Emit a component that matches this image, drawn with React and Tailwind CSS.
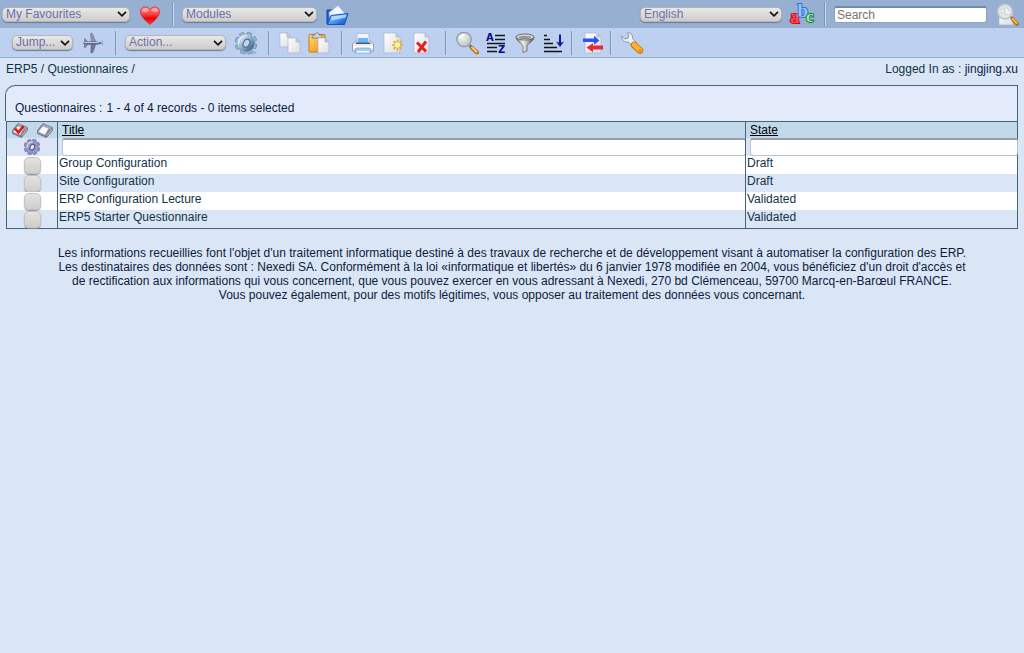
import React from "react";

function Icon({ children }) {
  return (
    <svg viewBox="0 0 24 24" className="block size-6 overflow-visible" fill="none" aria-hidden="true">
      {children}
    </svg>
  );
}

function Gradients() {
  return (
    <svg className="absolute size-0" aria-hidden="true">
      <defs>
        <linearGradient id="red" x1="0" y1="0" x2="0" y2="1">
          <stop offset="0" stopColor="#ff8a8a" />
          <stop offset=".45" stopColor="#ff3a3a" />
          <stop offset=".65" stopColor="#e80000" />
          <stop offset="1" stopColor="#ff4040" />
        </linearGradient>
        <linearGradient id="blue" x1="0" y1="0" x2="1" y2="1">
          <stop offset="0" stopColor="#a8dcff" />
          <stop offset=".5" stopColor="#4f9df5" />
          <stop offset="1" stopColor="#0b3fc0" />
        </linearGradient>
        <linearGradient id="paper" x1="0" y1="0" x2="1" y2="1">
          <stop offset="0" stopColor="#ffffff" />
          <stop offset="1" stopColor="#dcdce6" />
        </linearGradient>
        <linearGradient id="steel" x1="0" y1="0" x2="1" y2="1">
          <stop offset="0" stopColor="#dbe9f4" />
          <stop offset=".5" stopColor="#8fafcb" />
          <stop offset="1" stopColor="#43668e" />
        </linearGradient>
        <linearGradient id="gold" x1="0" y1="0" x2="1" y2="1">
          <stop offset="0" stopColor="#ffe07a" />
          <stop offset="1" stopColor="#ee8a00" />
        </linearGradient>
        <linearGradient id="metal" x1="0" y1="0" x2="1" y2="0">
          <stop offset="0" stopColor="#6c6c6c" />
          <stop offset=".4" stopColor="#f2f2f2" />
          <stop offset="1" stopColor="#4c4c4c" />
        </linearGradient>
        <radialGradient id="glass" cx=".4" cy=".35" r=".7">
          <stop offset="0" stopColor="#f4f6f4" />
          <stop offset="1" stopColor="#b4c2c4" />
        </radialGradient>
      </defs>
    </svg>
  );
}

const Heart = () => (
  <Icon>
    <path d="M12 22.500C8 19 2.500 14.500 2.500 9.500 2.500 6.500 4.700 5 7.200 5 9.500 5 11 6 12 7.700 13 6 14.500 5 16.800 5 19.300 5 21.500 6.500 21.500 9.500 21.500 14.500 16 19 12 22.500Z" fill="url(#red)" stroke="#d42a35" strokeWidth=".8" />
    <path d="M4 9c.3-2 1.800-3 3.500-3 2 0 3 1 3.700 2.500C9 10.500 6 11 4 9Z" fill="#ffb9b9" opacity=".7" />
    <path d="M13 8.500c.8-1.700 2-2.500 3.700-2.500 2 0 3.300 1 3.500 3-2 1.500-5 1-7.200-.5Z" fill="#ffb9b9" opacity=".6" />
  </Icon>
);

const Folder = () => (
  <Icon>
    <path d="M2 8h6l1 2h10v12h-17Z" fill="#2463dc" stroke="#1240a8" />
    <path d="m4 10.500 9-7 7 8-3 6H5Z" fill="#f4f6ff" stroke="#a9b6de" strokeWidth=".7" />
    <path d="M6 13.500 23 11.500 19.500 22.500h-17Z" fill="url(#blue)" stroke="#1350d0" />
    <path d="m7 14.500 14.500-2-1 3-14.500 3Z" fill="#c4e4ff" opacity=".8" />
  </Icon>
);

const Plane = () => (
  <Icon>
    <path d="M9.500 2.500c.8-.7 1.700-.5 2.200.5l3 7.500h-4.500Z" fill="#8d92ae" stroke="#747a99" strokeWidth=".6" />
    <path d="M9.800 21.500c.8.700 1.700.5 2.200-.5l2.700-7.500h-4.500Z" fill="#70769a" stroke="#5e6486" strokeWidth=".6" />
    <path d="M3 7.500h1.500L7 11v3l-2.500 3H3Z" fill="#7e84a3" />
    <path d="M2.500 11c5-1 12-1 16 0 1.500.3 2.500.6 2.500 1s-1 .9-2.500 1.200c-4 1-11 1-16 0Z" fill="#646a8b" />
    <path d="M3 11.500h15" stroke="#c1c6da" strokeWidth="1" />
    <path d="M21.500 9.500v5" stroke="#9298b5" strokeWidth=".8" />
  </Icon>
);

const teeth = [0, 45, 90, 135, 180, 225, 270, 315];
const Gear = () => (
  <Icon>
    <ellipse cx="15" cy="21.500" rx="8" ry="2" fill="#7b90b5" opacity=".4" />
    {teeth.map((a) => (
      <path key={a} d="M8.800 6 10 1h4l1.200 5Z" transform={`rotate(${a + 20} 12 12)`} fill="#96b4ce" stroke="#6488ac" strokeWidth=".6" />
    ))}
    <circle cx="12" cy="12" r="6" stroke="url(#steel)" strokeWidth="5.200" />
    <ellipse cx="12.500" cy="12" rx="3" ry="4.300" transform="rotate(30 12 12)" fill="#c3d3ed" stroke="#47698f" strokeWidth="1.100" />
    <path d="M4.500 13c0-5 3-8.500 8-8.500" stroke="#e9f3fa" strokeWidth="1.200" />
  </Icon>
);

const Page = ({ x = 0, y = 0, w = 12, h = 15 }) => (
  <path d={`M${x} ${y}h${w - 4}l4 4v${h - 4}h-${w}Z M${x + w - 4} ${y}v4h4`} fill="url(#paper)" stroke="#aeb4c4" strokeWidth=".7" />
);

const Copy = () => (
  <Icon>
    <Page x={2} y={2} w={11} h={14} />
    <Page x={10} y={7} w={12} h={15} />
  </Icon>
);

const Paste = () => (
  <Icon>
    <rect x="2" y="3.500" width="16" height="17.500" rx="1" fill="url(#gold)" stroke="#c97b08" />
    <path d="M5 6c0-2 2-2 3-2 0-3 4-3 4 0 1 0 3 0 3 2v1H5Z" fill="#d3d5dc" stroke="#70727b" strokeWidth=".8" />
    <Page x={11} y={7} w={11} h={15} />
  </Icon>
);

const Printer = () => (
  <Icon>
    <path d="m1.500 13 3-3h15l3 3v7h-21Z" fill="#e7eaf0" stroke="#8591a7" strokeWidth=".8" />
    <path d="M6 2.500h12V12H6Z" fill="#eef5ff" stroke="#9fb4d2" strokeWidth=".7" />
    <path d="M7 7h10v5H7Z" fill="#72b5f2" />
    <path d="M5 11.500h14l.5 1.500h-15Z" fill="#4b5b71" />
    <path d="M2 15h20v2H2Z" fill="#fff" />
    <path d="m5 17-1 5h16l-1-5Z" fill="#9bd0fa" stroke="#8ba2bf" strokeWidth=".8" />
    <path d="M6 20h12l.5 1.500h-13Z" fill="#fff" />
  </Icon>
);

const NewPage = () => (
  <Icon>
    <Page x={3} y={2} w={16} h={20} />
    <g stroke="#f0a80c" strokeWidth="1.700">
      <path d="M16.500 8.500v11M11 14h11M12.600 10.100l7.800 7.800M20.400 10.100l-7.800 7.800" />
    </g>
    <circle cx="16.500" cy="14" r="2.700" fill="#fff3a8" />
  </Icon>
);

const DeletePage = () => (
  <Icon>
    <Page x={3} y={2} w={15} h={20} />
    <path d="m6 11.500 9 9M15 10.500l-8 10.500" stroke="#e91f18" strokeWidth="2.900" />
  </Icon>
);

const Magnifier = () => (
  <Icon>
    <path d="m14.500 14.500 3 2.500" stroke="#73736f" strokeWidth="3" />
    <path d="m17 17 5 4.500" stroke="#b86a08" strokeWidth="4" strokeLinecap="round" />
    <path d="m17 16.500 4.500 4.200" stroke="#ffc98a" strokeWidth="2" strokeLinecap="round" />
    <circle cx="9" cy="8.500" r="7.200" fill="url(#glass)" stroke="#8f9997" strokeWidth="1.200" />
    <path d="M4.500 8c.5-2.500 2-4 5-4" stroke="#fff" strokeWidth="1.500" />
  </Icon>
);

const SortAZ = () => (
  <Icon>
    <path d="M11 4.500h10M11 8.500h10M3 12.500h18M3 16.500h10M3 20.500h10" stroke="#161616" strokeWidth="1.300" />
    <text x="2" y="10" fontSize="10" className="font-['DejaVu_Sans'] font-bold" fill="#0b0b8c">A</text>
    <text x="14" y="22" fontSize="10" className="font-['DejaVu_Sans'] font-bold" fill="#0b0b8c">Z</text>
  </Icon>
);

const Filter = () => (
  <Icon>
    <path d="M3 6c0 4 5.500 6 7 9v6.500l4-1.500V15c1.500-3 7-5 7-9Z" fill="url(#metal)" stroke="#666" strokeWidth=".8" />
    <ellipse cx="12" cy="6" rx="9" ry="3" fill="#d8d8d8" stroke="#6d6d6d" />
    <ellipse cx="12" cy="6.500" rx="6.500" ry="1.600" fill="#959595" />
  </Icon>
);

const SortDown = () => (
  <Icon>
    <path d="M2 4.500h3M2 8.500h6M2 12.500h9M2 16.500h13M2 20.500h18" stroke="#111" strokeWidth="1.400" />
    <path d="M18 3.500v9" stroke="#151597" strokeWidth="2" />
    <path d="m14 10.500 4 1.500 4-1.500-4 5.500Z" fill="#151597" />
  </Icon>
);

const Exchange = () => (
  <Icon>
    <Page x={4} y={2} w={16} h={20} />
    <path d="M2 7.500h11V4.800l5.500 4.700-5.500 4.200v-2.700H2Z" fill="#2855f5" />
    <path d="M22 14.500H12v-2.300l-6.500 4.300 6.500 4.700V18.500h10Z" fill="#ee2637" />
  </Icon>
);

const Wrench = () => (
  <Icon>
    <path d="M7.500 1.800c3-.2 5.500 2.200 5 5.700l4 4-4 4-4-4.500c-4 .5-7-2-7-6L5 8l3-.8.7-2.700Z" fill="#edf0f5" stroke="#848b9a" strokeWidth=".9" />
    <path d="m14 14 6 5.500" stroke="#c87706" strokeWidth="6.500" strokeLinecap="round" />
    <path d="m14 13.700 6 5.500" stroke="#ffb62e" strokeWidth="4.600" strokeLinecap="round" />
    <circle cx="20" cy="19.500" r="1" fill="#b96b05" />
  </Icon>
);

const Abc = () => (
  <Icon>
    <text x="0" y="21" fontSize="19" strokeWidth="1.800" paintOrder="stroke" className="font-['Liberation_Serif'] font-bold">
      <tspan fill="#ff4a52" stroke="#c40a1c">a</tspan>
      <tspan dx="-2" dy="-6" fill="#8cc6ff" stroke="#2b6cd0">b</tspan>
      <tspan dx="-2" dy="5" fontSize="17" fill="#9af09c" stroke="#147a34">c</tspan>
    </text>
  </Icon>
);

const SearchPage = () => (
  <Icon>
    <path d="M4 5h10l4 4v14H4Z" fill="url(#paper)" stroke="#aeb4c4" strokeWidth=".7" />
    <path d="m15 14 3 3" stroke="#73736f" strokeWidth="2.500" />
    <path d="m17.500 17 4.500 5" stroke="#b86a08" strokeWidth="3.600" strokeLinecap="round" />
    <path d="m17.500 16.700 4 4.500" stroke="#ffbb3d" strokeWidth="1.800" strokeLinecap="round" />
    <circle cx="10" cy="9.500" r="7.500" fill="#dfe4e7" fillOpacity=".95" stroke="#b9c0c4" strokeWidth="1.300" />
    <path d="M6 7h3v4H6ZM10 6h3v3h3v3h-6Z" fill="#f4f6f7" stroke="#c5cbd0" strokeWidth=".6" />
  </Icon>
);

function SmallPad({ checked }) {
  return (
    <svg viewBox="0 0 16 16" className="block size-4" fill="none" aria-hidden="true">
      <path d="m6 1.500 9.500 4v3L9.500 15.500.5 11.500V8.500Z" fill="#84848f" stroke="#666672" strokeWidth=".7" />
      <path d="m6 3.500 6 2.500-4 7-7-3Z" fill="#f6f6fb" stroke="#a2a2b0" strokeWidth=".6" />
      <path d="m6.500 2 8.500 3.500-1.500 2-8.500-3.500Z" fill="#a5a5b8" />
      <path d="m10 13.500 5-6" stroke="#d4d4df" strokeWidth=".8" />
      {checked && <path d="m3 6.500 3.500 4 5-6.500" stroke="#ee1111" strokeWidth="2.600" />}
    </svg>
  );
}

function SmallGear() {
  return (
    <svg viewBox="0 0 24 24" className="block size-4" fill="none" aria-hidden="true">
      {teeth.map((a) => (
        <path key={a} d="M8.500 6 9.500 0h5l1 6Z" transform={`rotate(${a + 20} 12 12)`} fill="#8b8ebf" stroke="#6c6fa4" strokeWidth=".8" />
      ))}
      <circle cx="12" cy="12" r="6.300" stroke="#9497c7" strokeWidth="5" />
      <path d="M4.500 13c0-5 3-8.500 8.500-8.500" stroke="#d3d5f0" strokeWidth="2" />
      <ellipse cx="12.500" cy="12" rx="3.200" ry="4.600" transform="rotate(30 12 12)" fill="#e3e8f8" stroke="#484b80" strokeWidth="1.500" />
    </svg>
  );
}

const IconButton = ({ label, children }) => (
  <button type="button" aria-label={label} title={label} className="shrink-0">
    {children}
  </button>
);

const Select = ({ label, width }) => (
  <div className={`${width} mr-2 grid shrink-0 items-center`}>
    <select
      aria-label={label}
      className="col-start-1 row-start-1 h-[15px] w-full appearance-none rounded-[5px] border border-[#b5b5b8] bg-linear-to-b from-[#e9e9e8] to-[#cfcdca] pl-[3px] text-xs leading-[13px] text-[#6a70b0] shadow-[0_1px_1px_#667b99]"
    >
      <option>{label}</option>
    </select>
    <svg viewBox="0 0 10 6" className="pointer-events-none col-start-1 row-start-1 mr-[3px] h-1.5 w-2.5 justify-self-end" fill="none" aria-hidden="true">
      <path d="m1 .8 4 4 4-4" stroke="#111" strokeWidth="1.700" />
    </svg>
  </div>
);

const Separator = ({ tight }) => (
  <span className={`${tight ? "ml-[5px]" : "ml-2.5"} mr-2 h-6 w-0.5 shrink-0 border-l border-r border-l-[#7899bb] border-r-[#c5d8e6]`} />
);

const rows = [
  ["Group Configuration", "Draft"],
  ["Site Configuration", "Draft"],
  ["ERP Configuration Lecture", "Validated"],
  ["ERP5 Starter Questionnaire", "Validated"],
];

const filterClass =
  "ml-1 block h-[18px] w-[calc(100%-3px)] rounded-[3px] border border-t-2 border-[#b5c3d8] border-t-[#969ca8] bg-white px-1";

export default function App() {
  return (
    <div className="min-h-screen bg-[#dae6f6] font-['Liberation_Sans',Arial,sans-serif] text-xs leading-3.5 text-[#0f3347]">
      <Gradients />
      <header>
        <div className="flex h-7 items-center justify-between bg-[#97b0d1] pl-0.5 pr-[5px]">
          <div className="flex items-center">
            <Select label="My Favourites" width="w-32" />
            <IconButton label="Favourites"><Heart /></IconButton>
            <Separator />
            <Select label="Modules" width="w-[135px]" />
            <IconButton label="Open module"><Folder /></IconButton>
          </div>
          <div className="flex items-center">
            <Select label="English" width="w-[142px]" />
            <IconButton label="Change language"><Abc /></IconButton>
            <Separator />
            <input
              type="search"
              aria-label="Search"
              placeholder="Search"
              className="mr-2 h-[17px] w-[153px] rounded-[3px] border border-t-2 border-[#8ba1c0] border-t-[#7187a5] bg-white px-0.5 leading-3.5 placeholder:text-[#757575]"
            />
            <IconButton label="Search"><SearchPage /></IconButton>
          </div>
        </div>
        <div className="flex h-[30px] items-center border-b border-[#97b0d1] bg-[#bdd0f0] pl-3">
          <Select label="Jump..." width="w-[61px]" />
          <IconButton label="Jump"><Plane /></IconButton>
          <Separator />
          <Select label="Action..." width="w-[101px]" />
          <IconButton label="Run action"><Gear /></IconButton>
          <Separator />
          <div className="flex gap-[5px]">
            <IconButton label="Copy"><Copy /></IconButton>
            <IconButton label="Paste"><Paste /></IconButton>
          </div>
          <Separator />
          <div className="flex gap-1.5">
            <IconButton label="Print"><Printer /></IconButton>
            <IconButton label="New"><NewPage /></IconButton>
            <IconButton label="Delete"><DeletePage /></IconButton>
          </div>
          <Separator />
          <div className="flex gap-[5px]">
            <IconButton label="Find"><Magnifier /></IconButton>
            <IconButton label="Sort"><SortAZ /></IconButton>
            <IconButton label="Filter"><Filter /></IconButton>
            <IconButton label="Order"><SortDown /></IconButton>
          </div>
          <Separator tight />
          <IconButton label="Import / Export"><Exchange /></IconButton>
          <Separator tight />
          <IconButton label="Configure"><Wrench /></IconButton>
        </div>
      </header>

      <div className="flex justify-between px-1.5 pt-1 pb-[9px]">
        <nav>
          <a href="#erp5">ERP5</a> / <a href="#questionnaires">Questionnaires</a> /
        </nav>
        <p>Logged In as : <span className="text-[#0b1d4a]">jingjing.xu</span></p>
      </div>

      <main className="pl-[5px] pr-1.5">
        <div className="flex h-9 items-end gap-1 rounded-tl-[10px] border border-b-0 border-[#3f6579] bg-[#e3eafa] pb-1.5 pl-[9px] text-[#0c1c3c]">
          <h1>Questionnaires :</h1>
          <p>1 - 4 of 4 records - 0 items selected</p>
        </div>
        <div className="pl-px">
          <table className="w-full table-fixed border-separate border-spacing-0 border border-[#3f6579] text-left">
            <colgroup>
              <col className="w-[50px]" />
              <col />
              <col className="w-68" />
            </colgroup>
            <thead>
              <tr className="h-4 bg-[#c1d9eb] text-black">
                <th className="p-0">
                  <div className="flex justify-between px-1 pl-[5px]">
                    <button type="button" aria-label="Check all"><SmallPad checked /></button>
                    <button type="button" aria-label="Uncheck all"><SmallPad /></button>
                  </div>
                </th>
                <th className="border-l border-[#3f6579] p-0 pl-1 font-normal"><a href="#title" className="underline">Title</a></th>
                <th className="border-l border-[#3f6579] p-0 pl-1 font-normal"><a href="#state" className="underline">State</a></th>
              </tr>
              <tr className="h-[18px]">
                <td className="p-0">
                  <button type="button" aria-label="Configure list" className="mx-auto block"><SmallGear /></button>
                </td>
                <td className="border-l border-[#3f6579] p-0"><input aria-label="Filter by title" className={filterClass} /></td>
                <td className="border-l border-[#3f6579] p-0"><input aria-label="Filter by state" className={filterClass} /></td>
              </tr>
            </thead>
            <tbody>
              {rows.map(([title, state]) => (
                <tr key={title} className="h-[18px] odd:bg-white">
                  <td className="p-0">
                    <input
                      type="checkbox"
                      aria-label={`Select ${title}`}
                      className="mx-auto mt-px block size-[17px] appearance-none rounded-[5px] border border-[#c3c3c3] bg-linear-to-b from-[#e3e2e0] to-[#d0cecb] shadow-[0_1px_1px_#8b8f96] checked:from-[#9fb8dc]"
                    />
                  </td>
                  <td className="border-l border-[#3f6579] p-0 pl-px align-top"><a href="#item">{title}</a></td>
                  <td className="border-l border-[#3f6579] p-0 pl-px align-top"><a href="#item">{state}</a></td>
                </tr>
              ))}
            </tbody>
          </table>
        </div>
      </main>

      <footer className="px-10 pt-[17px] text-center text-[#0c1c3c]">
        Les informations recueillies font l'objet d'un traitement informatique destiné à des travaux de recherche et de développement visant à automatiser la configuration des ERP.
        <br />
        Les destinataires des données sont : Nexedi SA. Conformément à la loi «informatique et libertés» du 6 janvier 1978 modifiée en 2004, vous bénéficiez d'un droit d'accès et
        <br />
        de rectification aux informations qui vous concernent, que vous pouvez exercer en vous adressant à Nexedi, 270 bd Clémenceau, 59700 Marcq-en-Barœul FRANCE.
        <br />
        Vous pouvez également, pour des motifs légitimes, vous opposer au traitement des données vous concernant.
      </footer>
    </div>
  );
}
